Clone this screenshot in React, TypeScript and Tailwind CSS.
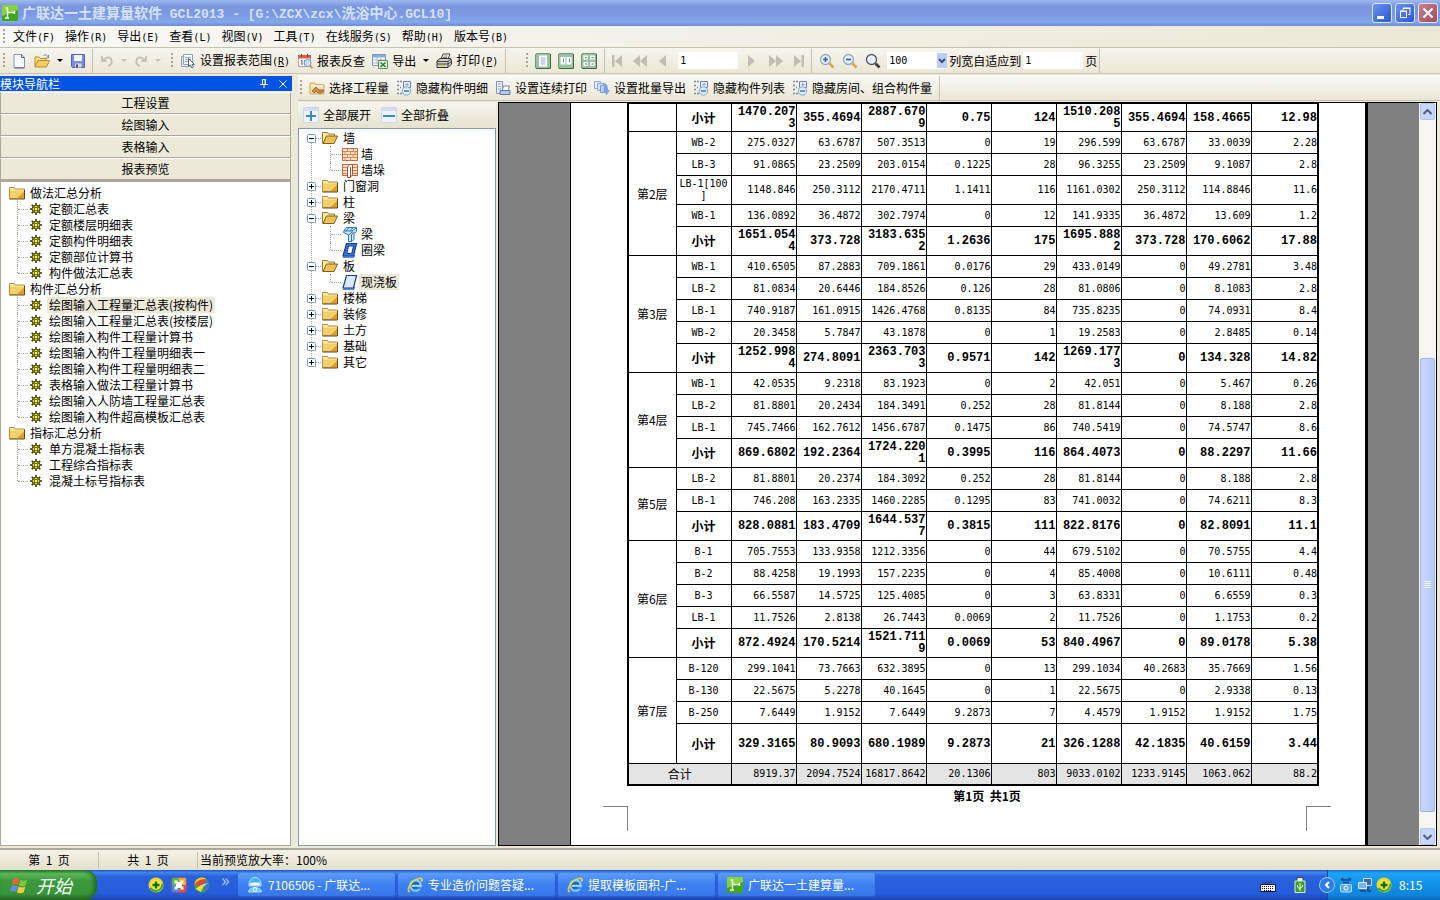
import type { ReactNode } from "react";

const sans = "font-['Noto_Sans_CJK_SC',sans-serif]";
const mono = "font-['DejaVu_Sans_Mono',monospace]";

const menus = [
  ["文件", "F"], ["操作", "R"], ["导出", "E"], ["查看", "L"], ["视图", "V"],
  ["工具", "T"], ["在线服务", "S"], ["帮助", "H"], ["版本号", "B"],
];

const reports = [
  { name: "做法汇总分析", items: ["定额汇总表", "定额楼层明细表", "定额构件明细表", "定额部位计算书", "构件做法汇总表"] },
  {
    name: "构件汇总分析",
    items: [
      "绘图输入工程量汇总表(按构件)", "绘图输入工程量汇总表(按楼层)", "绘图输入构件工程量计算书", "绘图输入构件工程量明细表一",
      "绘图输入构件工程量明细表二", "表格输入做法工程量计算书", "绘图输入人防墙工程量汇总表", "绘图输入构件超高模板汇总表",
    ],
  },
  { name: "指标汇总分析", items: ["单方混凝土指标表", "工程综合指标表", "混凝土标号指标表"] },
];

type Kind = "wall" | "pier" | "beam" | "ring" | "slab";
const parts: { name: string; items?: { name: string; kind: Kind }[] }[] = [
  { name: "墙", items: [{ name: "墙", kind: "wall" }, { name: "墙垛", kind: "pier" }] },
  { name: "门窗洞" },
  { name: "柱" },
  { name: "梁", items: [{ name: "梁", kind: "beam" }, { name: "圈梁", kind: "ring" }] },
  { name: "板", items: [{ name: "现浇板", kind: "slab" }] },
  { name: "楼梯" },
  { name: "装修" },
  { name: "土方" },
  { name: "基础" },
  { name: "其它" },
];

const floors: { name: string; rows: string[][] }[] = [
  { name: "", rows: [["小计", "1470.2073", "355.4694", "2887.6709", "0.75", "124", "1510.2085", "355.4694", "158.4665", "12.98"]] },
  {
    name: "第2层",
    rows: [
      ["WB-2", "275.0327", "63.6787", "507.3513", "0", "19", "296.599", "63.6787", "33.0039", "2.28"],
      ["LB-3", "91.0865", "23.2509", "203.0154", "0.1225", "28", "96.3255", "23.2509", "9.1087", "2.8"],
      ["LB-1[100]", "1148.846", "250.3112", "2170.4711", "1.1411", "116", "1161.0302", "250.3112", "114.8846", "11.6"],
      ["WB-1", "136.0892", "36.4872", "302.7974", "0", "12", "141.9335", "36.4872", "13.609", "1.2"],
      ["小计", "1651.0544", "373.728", "3183.6352", "1.2636", "175", "1695.8882", "373.728", "170.6062", "17.88"],
    ],
  },
  {
    name: "第3层",
    rows: [
      ["WB-1", "410.6505", "87.2883", "709.1861", "0.0176", "29", "433.0149", "0", "49.2781", "3.48"],
      ["LB-2", "81.0834", "20.6446", "184.8526", "0.126", "28", "81.0806", "0", "8.1083", "2.8"],
      ["LB-1", "740.9187", "161.0915", "1426.4768", "0.8135", "84", "735.8235", "0", "74.0931", "8.4"],
      ["WB-2", "20.3458", "5.7847", "43.1878", "0", "1", "19.2583", "0", "2.8485", "0.14"],
      ["小计", "1252.9984", "274.8091", "2363.7033", "0.9571", "142", "1269.1773", "0", "134.328", "14.82"],
    ],
  },
  {
    name: "第4层",
    rows: [
      ["WB-1", "42.0535", "9.2318", "83.1923", "0", "2", "42.051", "0", "5.467", "0.26"],
      ["LB-2", "81.8801", "20.2434", "184.3491", "0.252", "28", "81.8144", "0", "8.188", "2.8"],
      ["LB-1", "745.7466", "162.7612", "1456.6787", "0.1475", "86", "740.5419", "0", "74.5747", "8.6"],
      ["小计", "869.6802", "192.2364", "1724.2201", "0.3995", "116", "864.4073", "0", "88.2297", "11.66"],
    ],
  },
  {
    name: "第5层",
    rows: [
      ["LB-2", "81.8801", "20.2374", "184.3092", "0.252", "28", "81.8144", "0", "8.188", "2.8"],
      ["LB-1", "746.208", "163.2335", "1460.2285", "0.1295", "83", "741.0032", "0", "74.6211", "8.3"],
      ["小计", "828.0881", "183.4709", "1644.5377", "0.3815", "111", "822.8176", "0", "82.8091", "11.1"],
    ],
  },
  {
    name: "第6层",
    rows: [
      ["B-1", "705.7553", "133.9358", "1212.3356", "0", "44", "679.5102", "0", "70.5755", "4.4"],
      ["B-2", "88.4258", "19.1993", "157.2235", "0", "4", "85.4008", "0", "10.6111", "0.48"],
      ["B-3", "66.5587", "14.5725", "125.4085", "0", "3", "63.8331", "0", "6.6559", "0.3"],
      ["LB-1", "11.7526", "2.8138", "26.7443", "0.0069", "2", "11.7526", "0", "1.1753", "0.2"],
      ["小计", "872.4924", "170.5214", "1521.7119", "0.0069", "53", "840.4967", "0", "89.0178", "5.38"],
    ],
  },
  {
    name: "第7层",
    rows: [
      ["B-120", "299.1041", "73.7663", "632.3895", "0", "13", "299.1034", "40.2683", "35.7669", "1.56"],
      ["B-130", "22.5675", "5.2278", "40.1645", "0", "1", "22.5675", "0", "2.9338", "0.13"],
      ["B-250", "7.6449", "1.9152", "7.6449", "9.2873", "7", "4.4579", "1.9152", "1.9152", "1.75"],
      ["小计", "329.3165", "80.9093", "680.1989", "9.2873", "21", "326.1288", "42.1835", "40.6159", "3.44"],
    ],
  },
];
const totals = ["8919.37", "2094.7524", "16817.8642", "20.1306", "803", "9033.0102", "1233.9145", "1063.062", "88.2"];

/* ---------- icons ---------- */

function Svg({ children, size = "w-4 h-4" }: { children: ReactNode; size?: string }) {
  return (
    <svg viewBox="0 0 16 16" className={`${size} shrink-0`} fill="none" aria-hidden="true">
      {children}
    </svg>
  );
}

const Logo = ({ size }: { size?: string }) => (
  <Svg size={size}>
    <rect width="16" height="16" rx="1" fill="#3fa81a" />
    <path d="M0 1a1 1 0 0 1 1-1h14a1 1 0 0 1 1 1v4L0 11z" fill="#86d43c" />
    <path d="M5.500 2.500v10.500M5.500 7.500h7.500M12.500 6v3M3 13h4M3.500 3h2" stroke="#fff" strokeWidth="1.400" />
  </Svg>
);

const Folder = () => (
  <Svg>
    <path d="M.5 3.500v-1h5l1 1.500h9v9.500H.5z" fill="#fbe9a8" stroke="#b08d3c" />
    <path d="M1 5.500h14.500v8H1z" fill="#f3cf67" />
    <path d="M8 13.500l7.500-7v7z" fill="#dda02c" />
    <path d="M.5 14h15v-9" stroke="#5e4a1c" />
  </Svg>
);

const OpenFolder = () => (
  <Svg>
    <path d="M.5 13.500v-11h5l1 1.500h6v3" fill="#fbe9a8" stroke="#9a7a2c" />
    <path d="M1 13.500L4.500 6H15.500L12 13.500z" fill="#f0c350" stroke="#7d6120" />
  </Svg>
);

const Gear = () => (
  <Svg size="w-3 h-3">
    <path d="M8 0v16M0 8h16M2.300 2.300l11.400 11.400M13.700 2.300L2.300 13.700" stroke="#3a3a10" strokeWidth="2.200" />
    <circle cx="8" cy="8" r="5.300" fill="#e8e020" stroke="#3a3a10" strokeWidth="1.300" />
    <path d="M6 3.500v9M10 3.500v9M3.500 6h9M3.500 10h9" stroke="#6c6a10" strokeWidth="1.200" />
    <rect x="7" y="7" width="2" height="2" fill="#fff" />
  </Svg>
);

function PartIcon({ kind }: { kind: Kind }) {
  if (kind === "wall")
    return (
      <Svg>
        <path d="M.5 2.500h15v12H.5z" fill="#fbe3cc" stroke="#c8683a" />
        <path d="M1 5.500h14M1 8.500h14M1 11.500h14M5.500 3v2.500M11.500 3v2.500M3 6v2.500M8.500 6v2.500M13 6v2.500M5.500 9v2.500M11 9v2.500M3 12v2.500M8.500 12v2.500" stroke="#dc8656" />
      </Svg>
    );
  if (kind === "pier")
    return (
      <Svg>
        <path d="M.5 2.500h15v11H.5z" fill="#fbe3cc" stroke="#c8683a" />
        <path d="M1 5.500h4M1 8.500h4M1 11.500h4M11 5.500h4M11 8.500h4M11 11.500h4" stroke="#dc8656" />
        <path d="M5.500 5l2-2.500h3v10l-2 3h-3z" fill="#fff" stroke="#b4532a" />
        <path d="M8.500 5v10" stroke="#b4532a" />
      </Svg>
    );
  if (kind === "beam")
    return (
      <Svg>
        <path d="M1.500 5.500l3-4h10v4l-2.500 2v6l-2 2H6.500V9L1.500 6.500z" fill="#cfe8fb" stroke="#2a78b8" />
        <path d="M2 5h8l4-3M6.500 9L11 5.500M9.500 15V8.500l3-2.500M4 5l3-3.500M8 5l3-3.500" stroke="#2a78b8" />
      </Svg>
    );
  return (
    <Svg>
      <path d="M4.500 1.500h10l-3 12.500H1z" fill={kind === "ring" ? "#3c78dc" : "#dceafc"} stroke="#123c8c" strokeWidth="1.200" />
      {kind === "ring" && <path d="M6.500 4h5l-1.800 7.500H4.800z" fill="#fff" stroke="#123c8c" />}
      <path d="M1 15h10.500l1-2" stroke="#2a62c4" strokeWidth="1.500" />
    </Svg>
  );
}

const NewFile = () => (
  <Svg>
    <path d="M3 1.500h7.500l3 3v10H3z" fill="#f6faff" stroke="#8494ac" />
    <path d="M10.500 1.500v3h3M13.500 15H3.500" stroke="#566a88" />
  </Svg>
);
const OpenFile = () => (
  <Svg>
    <path d="M1 14V4h4l1.500 1.500H12v3" fill="#f9dc8c" stroke="#bd8d2c" />
    <path d="M1 14L4 7.500h11.500L12.500 14z" fill="#f7ca5c" stroke="#bd8d2c" />
    <path d="M9 3c2-2 4-1.500 5 1M14.500 2v3h-3" stroke="#6c8cb4" />
  </Svg>
);
const Save = () => (
  <Svg>
    <path d="M1.500 1.500h13v13h-12l-1-1z" fill="#7c8cd8" stroke="#5462b0" />
    <path d="M4 2h8v6H4z" fill="#f0f4ff" />
    <path d="M5 10.500h6.500v4H5z" fill="#d4d8e8" />
    <path d="M6 11.500h2v3H6z" fill="#3c4890" />
  </Svg>
);
const Undo = ({ flip }: { flip?: boolean }) => (
  <Svg>
    <path d={flip ? "M7 13C1 11 3 4 7.500 4.500L12.500 7M13 3v5H8.500" : "M9 13c6-2 4-9-.5-8.500L3.500 7M3 3v5h4.500"} stroke="#c4c2b6" strokeWidth="1.800" />
  </Svg>
);
const Range = () => (
  <Svg>
    <path d="M1.500 3.500h9v10h-9z" fill="#e4ecf8" stroke="#8ca0c0" />
    <path d="M3.500 1.500h9v10h-9z" fill="#f8fbff" stroke="#8ca0c0" />
    <path d="M5 4.500h6M5 6.500h6M5 8.500h3" stroke="#9cb0cc" />
    <path d="M8.500 5.500v8l2-1.500 1.500 3 1.500-1-1.500-2.500h2.500z" fill="#fff" stroke="#5c6c88" />
  </Svg>
);
const Check = () => (
  <Svg>
    <path d="M1.500 2.500h12v11h-12z" fill="#fff" stroke="#a8a4b8" />
    <path d="M1 2h13v3.500H1z" fill="#d86048" />
    <path d="M4.500 1v3M10.500 1v3" stroke="#8c3c2c" />
    <path d="M4 7.500h1V12M7.500 7.500h2v4h-2z" stroke="#705048" />
    <circle cx="10.500" cy="10" r="3.500" fill="#c4e4f8" fillOpacity=".85" stroke="#6c9cc4" />
    <path d="M13 12.500l2.500 3" stroke="#d89838" strokeWidth="2" />
  </Svg>
);
const Excel = () => (
  <Svg>
    <path d="M.5 1.500h13v11H.5z" fill="#fff" stroke="#7c94bc" />
    <path d="M1 2h12.500v2.500H1z" fill="#8cacdc" />
    <path d="M1 7h12M1 10h12M5 4v8.500M9 4v8.500" stroke="#a4b8d8" />
    <path d="M6.500 7.500h9v8h-9z" fill="#e8f4e4" stroke="#5c9458" />
    <path d="M8.500 9.500l5 4.500M13.500 9.500l-5 4.500" stroke="#2c7c34" strokeWidth="1.600" />
  </Svg>
);
const Printer = () => (
  <Svg>
    <path d="M5 6l2-5h7l-2 5z" fill="#fff" stroke="#404040" />
    <path d="M7.500 3h4M7 4.500h4" stroke="#808080" />
    <path d="M1 8l3-2.500h10.500L15.500 8v3L12 14.500H1z" fill="#d4d2c8" stroke="#303030" />
    <path d="M1 8.500h11l3-2.500M1 11h11l3-2M12 8.500V14" stroke="#404040" />
    <path d="M3 12.500h6" stroke="#e0c030" />
  </Svg>
);
const PageView = ({ n }: { n: 1 | 2 | 4 }) => (
  <Svg>
    <rect x=".5" y=".5" width="15" height="15" rx="1.500" fill="#9cc0a2" stroke="#6c9c78" />
    <path d="M1 15.500h14.500V1" stroke="#3c6848" />
    {n === 1 && <path d="M4 2.500h8v11H4z" fill="#fff" />}
    {n === 1 && <path d="M5.500 5h5M5.500 7h5M5.500 9h5M5.500 11h5" stroke="#a0a8c8" />}
    {n === 2 && <path d="M2.500 4h5v7.500h-5zM8.500 4h5v7.500h-5z" fill="#fff" />}
    {n === 2 && <path d="M5.500 5.500v4M11.500 5.500v4" stroke="#7c88b8" />}
    {n === 4 && <path d="M2.500 2.500H7v4H2.500zM9 2.500h4.500v4H9zM2.500 9H7v4H2.500zM9 9h4.500v4H9z" fill="#fff" />}
    {n === 4 && <path d="M4 4.500h2M10.500 4.500h2M4 11h2M10.500 11h2" stroke="#5c8c68" />}
  </Svg>
);
const navPaths = {
  first: "M3 2h2.500v12H3zM13 2v12L6 8z",
  prior: "M8 2v12L1 8zM15 2v12L8 8z",
  prev: "M11 2v12L4 8z",
  next: "M3 2v12l7-6z",
  fast: "M1 2v12l7-6zM8 2v12l7-6z",
  last: "M3 2v12l7-6zM10.500 2H13v12h-2.500z",
};
const Nav = ({ to }: { to: keyof typeof navPaths }) => (
  <button type="button" aria-label={to}>
    <Svg>
      <path d={navPaths[to]} fill="#c0beb0" />
    </Svg>
  </button>
);
const Zoom = ({ sign }: { sign?: string }) => (
  <Svg>
    <path d="M10.500 10.500l4 4" stroke={sign ? "#d8a850" : "#403c38"} strokeWidth="2.600" />
    <circle cx="6.500" cy="6.500" r="5" fill="#e4f2fc" stroke={sign ? "#94a8c4" : "#505868"} strokeWidth="1.300" />
    {sign && <path d={sign} stroke="#3c60a8" strokeWidth="1.700" />}
  </Svg>
);
const Pick = () => (
  <Svg>
    <path d="M1 14V3h5l1.500 1.500H15V14z" fill="#f4dca0" stroke="#d0ac64" />
    <path d="M2 6h12" stroke="#fff" />
    <path d="M3 11l4-4 3 3h5l-2 3H9l-2-2-2 2z" fill="#c88c4c" stroke="#7c5428" strokeWidth=".7" />
  </Svg>
);
const Hide = () => (
  <Svg>
    <path d="M1 1.500h2M1 5.500h2M1 9.500h2M1 13.500h2M4 1.500h2M4 7.500h1M4 13.500h2" stroke="#7488a8" strokeWidth="1.500" />
    <path d="M7.500 1.500h7v6h-7z" fill="#e8f0fc" stroke="#6c84b4" />
    <path d="M9.500 3.500h3v2h-3z" fill="#8ca4cc" />
    <circle cx="10.500" cy="11" r="4.200" fill="#dcecfc" stroke="#84a8d4" />
    <path d="M8 11h5" stroke="#4c80c0" strokeWidth="1.600" />
  </Svg>
);
const SeqPrint = () => (
  <Svg>
    <path d="M1.500 1.500h6v12h-6z" fill="#eef4ff" stroke="#7c94c0" />
    <path d="M3 4h3M3 6.500h3M3 9h3" stroke="#8ca4cc" />
    <path d="M7 11l1.500-5h6L13 11z" fill="#fff" stroke="#6c84b4" />
    <path d="M5 10.500h10v4H5z" fill="#b4c8e8" stroke="#5c78a8" />
  </Svg>
);
const Batch = () => (
  <Svg>
    <path d="M.5 1.500h6v7h-6z" fill="#e4eefc" stroke="#8ca8d8" />
    <path d="M3.500 3.500h6v7h-6z" fill="#d4e2fa" stroke="#8ca8d8" />
    <path d="M6.500 5.500h4v7h-4z" fill="#b8d0f4" stroke="#7c9cd4" />
    <path d="M9 3c4 0 5 3 5 7h2l-3.500 5L9 10h2c0-3 0-4-2-5z" fill="#7ca4e4" />
  </Svg>
);
const PlusMinus = ({ minus }: { minus?: boolean }) => (
  <Svg>
    <path d="M.5.5h15v15H.5z" fill="#eef2fa" stroke="#ccd6ec" />
    <path d="M1 1h14v3H1z" fill="#d4dcf4" />
    <path d={minus ? "M2 9h12" : "M3 9h10M8 4v10"} stroke="#3a8cc0" strokeWidth="2" />
  </Svg>
);
const IE = () => (
  <Svg>
    <circle cx="8.500" cy="8.500" r="5.200" fill="#1c64c8" stroke="#7cd0fc" strokeWidth="2.200" />
    <path d="M5 8.800h9.500" stroke="#a4e0ff" strokeWidth="2" />
    <path d="M10 11h5.500" stroke="#3c80f0" strokeWidth="1.600" />
    <path d="M2.500 15C-1.500 12 6 1.500 14 1.200c1.600.3 1 2.300.3 3.300" stroke="#f4cc40" strokeWidth="1.600" />
  </Svg>
);
const Plus360 = () => (
  <Svg>
    <circle cx="8" cy="8" r="7.500" fill="#f4d820" />
    <path d="M1 11a7.500 7.500 0 0 0 14-5L12 9z" fill="#3ca838" />
    <circle cx="8" cy="8" r="5" fill="#f8e840" />
    <path d="M8 4.500v7M4.500 8h7" stroke="#1c6c1c" strokeWidth="2.400" />
  </Svg>
);
const Puzzle = () => (
  <Svg>
    <rect x=".5" y=".5" width="15" height="15" rx="2" fill="#e84c3c" />
    <path d="M1 1h7v7H1z" fill="#58b848" />
    <path d="M8 1h7v7H8z" fill="#f4a830" />
    <path d="M1 8h7v7H1z" fill="#4888dc" />
    <path d="M3.500 3.500h3v1.500h3V3.500h3v3H11v3h1.500v3h-3V11h-3v1.500h-3v-3H5v-3H3.500z" fill="#fff" />
  </Svg>
);
const Ball = () => (
  <Svg>
    <circle cx="8" cy="8" r="7.500" fill="#38a838" />
    <path d="M.5 8C0 3 6-1.500 12 1.500L7 7z" fill="#f4c82c" />
    <path d="M.5 8C3 3 9 1 13.500 3L8 9z" fill="#e44830" />
    <path d="M13.500 3c3 4 2 9-2.500 11.500C10 11 8.500 9 7 8z" fill="#3878dc" />
    <path d="M1.500 12C5 8 11 6 15 6.500 12 7 9 9 7 15z" fill="#f4dc38" />
  </Svg>
);
const Buddy = () => (
  <Svg>
    <path d="M2 7a6 6.500 0 0 1 12 0v2H2z" fill="#3cb4e8" stroke="#d8f4ff" strokeWidth=".8" />
    <rect x="3" y="5.500" width="10" height="3" rx="1.500" fill="#f4fcff" />
    <path d="M1.500 15c0-6 13-6 13 0z" fill="#58c8f0" stroke="#d8f4ff" strokeWidth=".8" />
    <circle cx="8" cy="12.500" r="1.800" stroke="#fff" />
  </Svg>
);
const Flag = () => (
  <Svg size="w-[20px] h-[20px]">
    <path d="M2.500 3.500c2-1.500 3.500-1 5 0L6.300 8c-1.500-1-3-1-5 0z" fill="#f0642c" />
    <path d="M8.300 3.700c2 1 3.500 1 5.500 0L12.500 8.300c-2 1-3.500 1-5.400 0z" fill="#7cc83c" />
    <path d="M1 9c2-1.300 3.500-1 5 0l-1.200 4.500c-1.500-1-3-1-5 0z" fill="#5c90ec" />
    <path d="M6.800 9.200c2 1 3.500 1 5.500 0L11 13.800c-2 1-3.500 1-5.400 0z" fill="#f8cc3c" />
  </Svg>
);

/* ---------- small pieces ---------- */

const Grip = () => <span className="mr-1 h-4 w-[2px] shrink-0 bg-[repeating-linear-gradient(#a8a698_0_2px,transparent_2px_4px)]" />;
const Sep = () => <span className="h-6 w-px shrink-0 bg-[#c5c2b0]" />;
const Caret = ({ off }: { off?: boolean }) => (
  <svg viewBox="0 0 6 3" className="h-[3px] w-[6px] shrink-0" aria-hidden="true">
    <path d="M0 0h6L3 3z" fill={off ? "#c4c2b6" : "#000"} />
  </svg>
);

function Tool({ icon, label, hot }: { icon: ReactNode; label: string; hot?: string }) {
  return (
    <button type="button" className="flex shrink-0 items-center gap-1 whitespace-nowrap">
      {icon}
      <span>
        {label}
        {hot && <span className={`text-[10px] ${mono}`}>(<u>{hot}</u>)</span>}
      </span>
    </button>
  );
}

const IconButton = ({ label, children }: { label: string; children: ReactNode }) => (
  <button type="button" aria-label={label} className="shrink-0">{children}</button>
);

const Expander = ({ open }: { open: boolean }) => (
  <svg viewBox="0 0 9 9" className="relative h-[9px] w-[9px] shrink-0" aria-hidden="true">
    <rect x=".5" y=".5" width="8" height="8" rx="1" fill="#fff" stroke="#7898b5" />
    <path d={open ? "M2 4.500h5" : "M2 4.500h5M4.500 2v5"} stroke="#000" />
  </svg>
);

function Splitter() {
  return <div className="w-[6px] shrink-0 bg-[#ece9d8]" />;
}

/* ---------- panels ---------- */

function TitleBar() {
  const btn = "flex h-5 w-5 items-center justify-center rounded-[3px] border border-[#dfe6fb]";
  const latin = "font-['Liberation_Mono',monospace] text-[13px] whitespace-pre";
  return (
    <header className="flex h-[26px] shrink-0 items-center gap-1 bg-[linear-gradient(#9db9ee,#7a96df_25%,#7d98e2_55%,#84a8ea_85%,#6f8ad8)] pl-[2px] pr-[2px]">
      <Logo />
      <h1 className="flex-1 truncate text-[14px] font-bold leading-5 text-[#d4e2f8]">
        广联达一土建算量软件<span className={latin}> GCL2013 - [G:\ZCX\zcx\</span>洗浴中心<span className={latin}>.GCL10]</span>
      </h1>
      <div className="flex gap-[3px]">
        <button type="button" aria-label="最小化" className={`${btn} bg-gradient-to-br from-[#6c92ec] to-[#2a56d4]`}>
          <span className="mr-1 mt-2 h-[3px] w-[7px] bg-white" />
        </button>
        <button type="button" aria-label="还原" className={`${btn} bg-gradient-to-br from-[#6c92ec] to-[#2a56d4]`}>
          <svg viewBox="0 0 12 12" className="h-3 w-3" fill="none" stroke="#fff" aria-hidden="true">
            <path d="M4 3.500V1.500h7v6H9M4 1h7.500" />
            <path d="M1.500 4.500h6v6h-6zM1 4h7" />
          </svg>
        </button>
        <button type="button" aria-label="关闭" className={`${btn} bg-gradient-to-br from-[#c88090] to-[#a04a5c]`}>
          <svg viewBox="0 0 12 12" className="h-3 w-3" stroke="#fff" strokeWidth="2" aria-hidden="true">
            <path d="M1.500 1.500l9 9M10.500 1.500l-9 9" />
          </svg>
        </button>
      </div>
    </header>
  );
}

function MainToolbar() {
  const box = `h-[17px] w-[60px] bg-white px-[2px] text-[10px] leading-4 ${mono}`;
  return (
    <div className="flex h-[26px] shrink-0 items-center border-b border-[#c5c2b0] bg-gradient-to-b from-[#f6f5ee] to-[#ebe7d6] pl-[3px]">
      <Grip />
      <div className="flex items-center gap-[7px] pl-[2px]">
        <IconButton label="新建"><NewFile /></IconButton>
        <IconButton label="打开"><OpenFile /></IconButton>
        <Caret />
        <IconButton label="保存"><Save /></IconButton>
      </div>
      <div className="flex items-center gap-[6px] pl-[6px]">
        <Sep />
        <IconButton label="撤销"><Undo /></IconButton>
        <Caret off />
        <IconButton label="重做"><Undo flip /></IconButton>
        <Caret off />
      </div>
      <div className="flex items-center pl-[10px]">
        <Grip />
        <div className="flex items-center gap-[7px] pl-[3px]">
          <Tool icon={<Range />} label="设置报表范围" hot="R" />
          <Tool icon={<Check />} label="报表反查" />
          <Tool icon={<Excel />} label="导出" />
          <Caret />
          <Tool icon={<Printer />} label="打印" hot="P" />
          <Sep />
        </div>
      </div>
      <div className="flex items-center pl-[20px]">
        <Grip />
        <div className="flex items-center gap-[7px] pl-[3px]">
          <IconButton label="单页"><PageView n={1} /></IconButton>
          <IconButton label="双页"><PageView n={2} /></IconButton>
          <IconButton label="四页"><PageView n={4} /></IconButton>
          <Sep />
        </div>
        <div className="flex items-center gap-[7px] px-1">
          <Nav to="first" />
          <Nav to="prior" />
          <Nav to="prev" />
          <input aria-label="页码" defaultValue="1" className={box} />
          <Nav to="next" />
          <Nav to="fast" />
          <Nav to="last" />
        </div>
        <div className="flex items-center gap-[7px]">
          <Sep />
          <IconButton label="放大"><Zoom sign="M4 6.500h5M6.500 4v5" /></IconButton>
          <IconButton label="缩小"><Zoom sign="M4 6.500h5" /></IconButton>
          <IconButton label="缩放"><Zoom /></IconButton>
        </div>
      </div>
      <div className="flex items-center gap-[2px] pl-[6px]">
        <div className="relative flex">
          <select aria-label="缩放比例" defaultValue="100" className={`appearance-none ${box}`}>
            <option>100</option>
          </select>
          <span className="pointer-events-none absolute right-0 top-[1px] flex h-[15px] w-[10px] items-center justify-center bg-[#bccdf8]">
            <svg viewBox="0 0 8 6" className="h-[6px] w-2" fill="none" stroke="#3a4c78" strokeWidth="2" aria-hidden="true">
              <path d="M1 1l3 3 3-3" />
            </svg>
          </span>
        </div>
        <label htmlFor="fit" className="whitespace-nowrap">列宽自适应到</label>
        <input id="fit" defaultValue="1" className={box} />
        <span>页</span>
        <Sep />
      </div>
    </div>
  );
}

function ReportToolbar() {
  return (
    <div className="flex h-[26px] shrink-0 items-center border-b border-[#c5c2b0] bg-gradient-to-b from-[#f9f8f3] to-[#ebe7d6] pl-[2px]">
      <Grip />
      <div className="flex items-center gap-[7px] pl-[3px]">
        <Tool icon={<Pick />} label="选择工程量" />
        <Tool icon={<Hide />} label="隐藏构件明细" />
        <Tool icon={<SeqPrint />} label="设置连续打印" />
        <Tool icon={<Batch />} label="设置批量导出" />
        <Tool icon={<Hide />} label="隐藏构件列表" />
        <Tool icon={<Hide />} label="隐藏房间、组合构件量" />
        <Sep />
      </div>
    </div>
  );
}

function NavPanel() {
  return (
    <aside className="flex w-[292px] shrink-0 flex-col pt-[2px]">
      <div className="flex h-[15px] shrink-0 items-center justify-between bg-[#0054e3] pr-[5px] leading-[15px] text-white">
        <h2>模块导航栏</h2>
        <div className="flex items-center gap-[11px]">
          <button type="button" aria-label="固定">
            <svg viewBox="0 0 8 9" className="h-[9px] w-2" fill="none" stroke="#fff" aria-hidden="true">
              <path d="M2.500 5V.5h3V5M0 5.500h8M4 5.500V9M5 .5V5" />
            </svg>
          </button>
          <button type="button" aria-label="关闭">
            <svg viewBox="0 0 8 8" className="h-2 w-2" stroke="#fff" aria-hidden="true">
              <path d="M.5.5l7 7M7.500.5l-7 7" />
            </svg>
          </button>
        </div>
      </div>
      <div className="mr-px mt-px flex flex-col">
        {["工程设置", "绘图输入", "表格输入", "报表预览"].map((t) => (
          <button key={t} type="button" className="h-[22px] border border-t-white border-b-[#aca899] border-l-[#aca899] border-r-[#aca899] bg-[#ece9d8] leading-5">
            {t}
          </button>
        ))}
      </div>
      <div className="mr-px flex-1 border border-t-2 border-[#aca899] bg-white pl-2 pt-[3px]">
        {reports.map((g) => (
          <section key={g.name}>
            <h3 className="flex h-4 items-center gap-[5px] leading-4"><Folder />{g.name}</h3>
            <ul>
              {g.items.map((name, i) => (
                <li key={name} className="flex h-4 items-center pl-2">
                  <span className={`w-px self-start border-l border-dotted border-[#aca899] ${i === g.items.length - 1 ? "h-2" : "h-4"}`} />
                  <span className="mr-[2px] w-[10px] border-t border-dotted border-[#aca899]" />
                  <Gear />
                  <button type="button" className={`ml-[5px] h-4 px-[2px] leading-4 ${name.includes("按构件") ? "bg-[#ece9d8]" : ""}`}>
                    {name}
                  </button>
                </li>
              ))}
            </ul>
          </section>
        ))}
      </div>
    </aside>
  );
}

function PartTree() {
  return (
    <div className="flex w-[198px] shrink-0 flex-col">
      <div className="flex h-[26px] shrink-0 items-center gap-[10px] bg-gradient-to-b from-[#f6f5ee] to-[#e6e2ce] pl-[5px]">
        <Tool icon={<PlusMinus />} label="全部展开" />
        <Tool icon={<PlusMinus minus />} label="全部折叠" />
      </div>
      <ul className="flex-1 border border-[#7f9db9] bg-white pl-2 pt-px">
        {parts.map((p, i) => (
          <li key={p.name} className="relative">
            {i < parts.length - 1 && <span className="absolute left-1 top-2 h-full border-l border-dotted border-[#aca899]" />}
            <div className="flex h-4 items-center leading-4">
              <Expander open={!!p.items} />
              <span className="mr-px w-[5px] border-t border-dotted border-[#aca899]" />
              {p.items ? <OpenFolder /> : <Folder />}
              <span className="ml-[5px]">{p.name}</span>
            </div>
            {p.items?.map((c, j) => (
              <div key={c.name} className="flex h-4 items-center pl-[23px] leading-4">
                <span className={`self-start border-l border-dotted border-[#aca899] ${j === p.items!.length - 1 ? "h-2" : "h-4"}`} />
                <span className="mr-px w-[10px] border-t border-dotted border-[#aca899]" />
                <PartIcon kind={c.kind} />
                <button type="button" className={`ml-[1px] h-4 px-[2px] leading-4 ${c.kind === "slab" ? "bg-[#ece9d8]" : ""}`}>{c.name}</button>
              </div>
            ))}
          </li>
        ))}
      </ul>
    </div>
  );
}

function rowHeight(floor: string, row: string[]) {
  if (!floor) return "h-[28px]";
  if (row[0] === "小计") return floor === "第7层" ? "h-[40px]" : "h-[29px]";
  return row[0].length > 8 ? "h-[29px]" : "h-[22px]";
}

function ReportTable() {
  const cell = "border border-black p-0 break-all [line-break:anywhere]";
  const num = `${cell} text-right`;
  return (
    <table className={`w-[692px] table-fixed border-collapse border-2 border-t-0 border-black text-[10px] leading-3 ${mono}`}>
      <colgroup>
        <col className="w-[48px]" />
        <col className="w-[55px]" />
        {totals.slice(1).map((t) => <col key={t} className="w-[65px]" />)}
        <col />
      </colgroup>
      <tbody>
        {floors.map((f) =>
          f.rows.map((r, i) => {
            const sum = r[0] === "小计";
            return (
              <tr key={f.name + r[0]} className={rowHeight(f.name, r)}>
                {i === 0 && (
                  <th rowSpan={f.rows.length} className={`${cell} text-[12px] font-normal ${sans}`}>{f.name}</th>
                )}
                <td className={`${cell} text-center ${sum ? `text-[12px] font-bold ${sans}` : ""}`}>{r[0]}</td>
                {r.slice(1).map((v, k) => (
                  <td key={k} className={`${num} ${sum ? "font-['Liberation_Mono',monospace] text-[12px] font-bold" : ""}`}>{v}</td>
                ))}
              </tr>
            );
          }),
        )}
        <tr className="h-[21px] bg-[#e4e4e4]">
          <th colSpan={2} className={`${cell} text-[12px] font-normal ${sans}`}>合计</th>
          {totals.map((v) => <td key={v} className={num}>{v}</td>)}
        </tr>
      </tbody>
    </table>
  );
}

function ScrollBar() {
  const btn = "flex h-[17px] shrink-0 items-center justify-center rounded-[2px] border border-[#b0c4f0] bg-[#c6d6fc]";
  return (
    <div className="flex w-[17px] shrink-0 flex-col bg-[#f6f5f0] px-px">
      <button type="button" aria-label="向上" className={btn}>
        <svg viewBox="0 0 9 6" className="h-[6px] w-[9px]" fill="none" stroke="#4d6185" strokeWidth="2" aria-hidden="true"><path d="M.5 5l4-4 4 4" /></svg>
      </button>
      <div className="grow-[241]" />
      <div className="flex grow-[452] flex-col items-center justify-center gap-px rounded-[2px] border border-[#9cb4ec] bg-gradient-to-r from-[#c9d8fc] to-[#b8cbf6]">
        {[0, 1, 2, 3].map((n) => <span key={n} className="h-px w-[7px] bg-[#eef4fe]" />)}
      </div>
      <div className="grow-[16]" />
      <button type="button" aria-label="向下" className={btn}>
        <svg viewBox="0 0 9 6" className="h-[6px] w-[9px]" fill="none" stroke="#4d6185" strokeWidth="2" aria-hidden="true"><path d="M.5 1l4 4 4-4" /></svg>
      </button>
    </div>
  );
}

function Preview() {
  return (
    <main className="mr-[3px] flex min-w-0 flex-1 border border-black bg-[#808080]">
      <div className="flex min-w-0 flex-1 overflow-hidden pl-[71px]">
        <div className="shrink-0 border-l border-r-[3px] border-black bg-white pl-8 pr-[34px]">
          <div className="pl-6 pr-3"><ReportTable /></div>
          <p className="pl-10 pt-[2px] text-center font-bold leading-4">第1页&nbsp; 共1页</p>
          <div className="mt-[2px] flex justify-between">
            <span className="h-[25px] w-[25px] border-r border-t border-[#808080]" />
            <span className="h-[25px] w-[25px] border-l border-t border-[#808080]" />
          </div>
        </div>
      </div>
      <ScrollBar />
    </main>
  );
}

const tasks = [
  { label: "7106506 - 广联达...", icon: <Buddy /> },
  { label: "专业造价问题答疑...", icon: <IE /> },
  { label: "提取模板面积-广...", icon: <IE /> },
  { label: "广联达一土建算量...", icon: <Logo /> },
];

function Taskbar() {
  return (
    <footer className="flex h-[30px] shrink-0 bg-[linear-gradient(#1f4fc0,#3f86ee_8%,#2a62dc_22%,#245cdb_80%,#1a44b0)] text-white">
      <button type="button" className="flex w-[97px] shrink-0 items-center gap-[6px] rounded-r-xl bg-[linear-gradient(#2c7c2c,#5cb85c_12%,#3c9a3c_35%,#389438_80%,#246824)] pl-[10px] text-[18px] italic leading-6 shadow-[inset_-3px_0_4px_#1f6a24]">
        <Flag />开始
      </button>
      <div className="flex w-[141px] shrink-0 items-center gap-[7px] pl-[51px]">
        <IconButton label="安全卫士"><Plus360 /></IconButton>
        <IconButton label="拼图"><Puzzle /></IconButton>
        <IconButton label="浏览器"><Ball /></IconButton>
        <span className="pb-3 pl-1 text-[18px] leading-4 text-[#b4ccf8]">»</span>
      </div>
      <div className="flex min-w-0 flex-1 items-center gap-[2px]">
        {tasks.map((t) => (
          <button key={t.label} type="button" className="flex h-6 w-[158px] items-center gap-[5px] rounded-[3px] bg-gradient-to-b from-[#5c9cf8] via-[#3c80f0] to-[#3878e8] pl-[9px] shadow-[inset_-1px_-1px_1px_#2a5cc8]">
            {t.icon}
            <span className="truncate">{t.label}</span>
          </button>
        ))}
      </div>
      <div className="flex items-center gap-4 pr-[19px]">
        <Svg>
          <path d="M.5 7.500h15v7H.5z" fill="#fff" stroke="#101820" />
          <path d="M2 9.500h12M2 11.500h12M4 13.500h8" stroke="#101820" strokeDasharray="1 1" />
          <path d="M4 7c0-3 3 0 4-3M8 7c0-3 3 0 4-3" stroke="#101820" strokeDasharray="1 1" />
        </Svg>
        <Svg>
          <path d="M5 .5h6v4H5z" fill="#f0f0f0" stroke="#404040" />
          <path d="M3 4h10v11.500H3z" fill="#3c9c2c" stroke="#d4f0c8" />
          <path d="M8 6v8M5.500 8v2L8 12M10.500 8v1.500L8 11" stroke="#fff" />
        </Svg>
      </div>
      <div className="flex w-[113px] shrink-0 items-center gap-[3px] bg-[linear-gradient(#0c6cd0,#1ca4f4_10%,#1290e8_50%,#0f84dc_85%,#0c64b8)] shadow-[inset_1px_0_0_#0c50a8]">
        <button type="button" aria-label="显示隐藏图标" className="-ml-2 flex h-4 w-4 items-center justify-center rounded-full border border-[#a4ccf8] bg-[#2c7ce4]">
          <svg viewBox="0 0 6 8" className="h-2 w-[6px]" fill="none" stroke="#fff" strokeWidth="2" aria-hidden="true"><path d="M5 1L2 4l3 3" /></svg>
        </button>
        <Svg>
          <path d="M3 3h10M3 3l2-2M13 3l-2-2M5 5.500h6" stroke="#0c4890" strokeWidth="1.500" />
          <rect x="2.500" y="7.500" width="11" height="7.500" rx="1" fill="#4ca8f4" stroke="#bce0ff" />
          <circle cx="8" cy="11" r="2" stroke="#fff" />
        </Svg>
        <Svg>
          <path d="M6.500 1.500h8v7h-8z" fill="#3868b8" stroke="#c8dcf0" />
          <path d="M1.500 5.500h8v6h-8z" fill="#78b4f0" stroke="#d8e8f8" />
          <path d="M3 14h6M11 10v4h3" stroke="#2c3c60" strokeWidth="1.500" />
        </Svg>
        <Plus360 />
        <time className="pl-1">8:15</time>
      </div>
    </footer>
  );
}

export default function App() {
  return (
    <div className={`flex h-screen flex-col overflow-hidden bg-[#ece9d8] text-[12px] leading-4 text-black ${sans}`}>
      <TitleBar />
      <nav className="flex h-[22px] shrink-0 items-center border-b border-[#c5c2b0] bg-gradient-to-r from-[#f8f8f6] to-[#ece8d6] pl-[3px]">
        <Grip />
        <div className="flex gap-[10px] pl-1">
          {menus.map(([label, key]) => (
            <button key={key} type="button" className="whitespace-nowrap">
              {label}<span className={`text-[10px] ${mono}`}>({key})</span>
            </button>
          ))}
        </div>
      </nav>
      <MainToolbar />
      <div className="flex min-h-0 flex-1">
        <NavPanel />
        <Splitter />
        <div className="flex min-w-0 flex-1 flex-col pt-px">
          <ReportToolbar />
          <div className="flex min-h-0 flex-1 pt-px">
            <PartTree />
            <div className="w-[2px] shrink-0" />
            <Preview />
          </div>
        </div>
      </div>
      <div className="mt-[2px] flex h-[22px] shrink-0 items-center border-t-2 border-[#aca899] bg-gradient-to-b from-[#f4f2e8] to-[#e4e0cc]">
        <span className="w-[99px] border-r border-[#c5c2b0] text-center">第&nbsp; 1&nbsp; 页</span>
        <span className="w-[99px] border-r border-[#c5c2b0] text-center">共&nbsp; 1&nbsp; 页</span>
        <span className="pl-[2px]">当前预览放大率：100%</span>
      </div>
      <Taskbar />
    </div>
  );
}
